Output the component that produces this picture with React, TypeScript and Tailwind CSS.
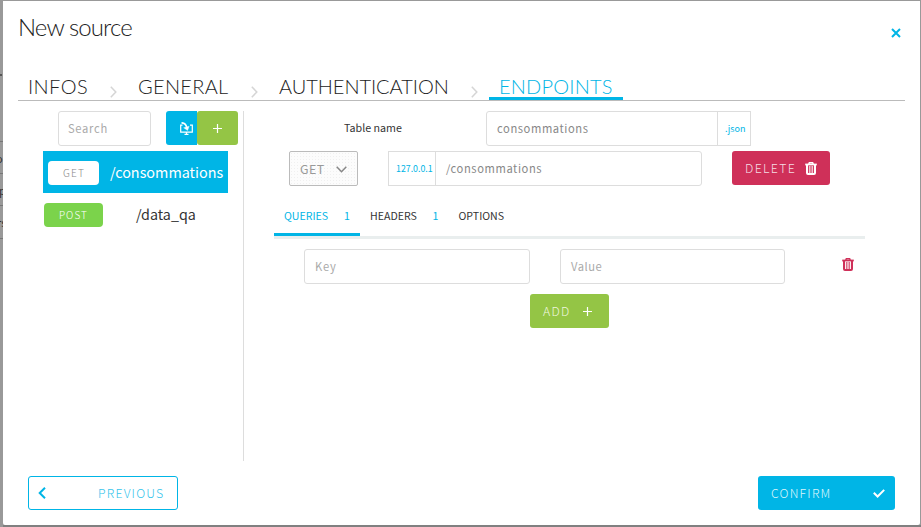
import React from "react";

const body = "font-['Noto_Sans_CJK_SC','Noto_Sans',sans-serif]";
const heading = "font-['Lato',sans-serif] font-light";

function Trash({ className }: { className: string }) {
  return (
    <svg viewBox="0 0 12 13" className={className} fill="none" stroke="currentColor">
      <path d="M0.2 2.5H11.8" strokeWidth="1.8" />
      <path d="M3.8 2.2L4.3 0.8H7.7L8.2 2.2" strokeWidth="1.4" />
      <path d="M2 3V10.9Q2 11.9 3 11.9H9Q10 11.9 10 10.9V3" strokeWidth="2" />
      <path d="M4.4 4V11M6 4V11M7.6 4V11" strokeWidth="0.8" />
    </svg>
  );
}

function Plus({ className }: { className: string }) {
  return (
    <svg viewBox="0 0 9 9" className={className} fill="none" stroke="currentColor" strokeWidth="1.2">
      <path d="M4.5 0V9M0 4.5H9" />
    </svg>
  );
}

function Separator({ className }: { className: string }) {
  return (
    <svg viewBox="0 0 7 12" className={className} fill="none" stroke="#d5d5d5" strokeWidth="1.5">
      <path d="M0.8 0.8L5.8 6L0.8 11.2" />
    </svg>
  );
}

function Backdrop() {
  return (
    <div className="relative h-full w-[3px] shrink-0 overflow-hidden bg-[#999] text-[11px] leading-4 text-[#333]">
      <div className="mt-[74px] h-[2px] w-[2px] bg-[#555]" />
      <div className="mt-[65px] h-px bg-[#777]" />
      <div className="-ml-[4px] mt-[8px] h-[23px]">o</div>
      <div className="h-px bg-[#777]" />
      <div className="-ml-[1px] mt-[8px] h-[23px]">p</div>
      <div className="h-px bg-[#777]" />
      <div className="-ml-[3px] mt-[8px] h-[24px]">rs</div>
      <div className="h-px bg-[#777]" />
    </div>
  );
}

function Steps() {
  const step = "whitespace-nowrap pt-[2px] text-[20px] leading-[24px] text-[#222]";
  return (
    <nav className={`${heading} ml-[15px] flex h-[29px] w-[887px] border-b border-[#bbb]`}>
      <div className={`${step} ml-[10px] w-[61px] tracking-[0.4px]`}>INFOS</div>
      <Separator className="ml-[21px] mt-[14px] h-3 w-[7px]" />
      <div className={`${step} ml-[21px] w-[91px] tracking-[0.3px]`}>GENERAL</div>
      <Separator className="ml-[22px] mt-[14px] h-3 w-[7px]" />
      <div className={`${step} ml-[21px] w-[171px] tracking-[-0.05px]`}>AUTHENTICATION</div>
      <Separator className="ml-[21px] mt-[14px] h-3 w-[7px]" />
      <div className="ml-[11px] h-[28px] w-[134px] border-b-[3px] border-[#00b5e6] pl-[10px] pt-[2px] text-[20px] leading-[24px] tracking-[0.2px] text-[#00b5e6]">ENDPOINTS</div>
    </nav>
  );
}

function Sidebar() {
  return (
    <aside className="ml-[40px] h-[350px] w-[201px] border-r border-[#ddd]">
      <div className="flex">
        <div className="ml-[15px] h-[35px] w-[93px] rounded-[3px] border border-[#ddd] pl-[9px] text-[11.2px] leading-[33px] tracking-[0.7px] text-[#aaa]">Search</div>
        <button className="ml-[15px] flex h-[34px] w-[31px] items-center rounded-l-[3px] bg-[#00b5e6] pl-[14px] text-white">
          <svg viewBox="0 0 13 13" className="h-[13px] w-[13px]" fill="none" stroke="currentColor">
            <path d="M2.5 3.2H0.7V10.2H12.3V3.2H10M4.5 12.3H8.5M6.5 10.2V12.3" strokeWidth="1.2" />
            <path d="M1.5 0.8Q5.8 1 6.8 5.5" strokeWidth="1.7" />
            <path d="M3.6 5.8L9.2 4.2L7.6 8.6Z" fill="currentColor" strokeWidth="0.3" />
          </svg>
        </button>
        <button className="-mr-px flex h-[34px] w-[41px] items-center justify-center rounded-[3px] bg-[#94c545] text-white">
          <Plus className="h-[9px] w-[9px]" />
        </button>
      </div>
      <div className="mt-[5px] flex h-[42px] w-[185px] items-center bg-[#00b5e6]">
        <span className="ml-[5px] mt-[2px] h-[24px] w-[51px] rounded-[4px] bg-white pl-[15px] text-[10.2px] font-light leading-[24px] tracking-[1.1px] text-[#888]">GET</span>
        <span className="ml-[11px] whitespace-nowrap text-[14.4px] leading-[20px] text-white">/consommations</span>
      </div>
      <div className="mt-[10px] flex h-[24px] items-center">
        <span className="ml-[1px] h-[24px] w-[59px] rounded-[4px] bg-[#7bd34b] pl-[15px] text-[10px] font-light leading-[24px] tracking-[1px] text-white">POST</span>
        <span className="-mt-[2px] ml-[33px] whitespace-nowrap text-[14.3px] leading-[20px] text-[#333]">/data_qa</span>
      </div>
    </aside>
  );
}

function Editor() {
  const field = "h-[35px] border border-[#ddd] pl-[10px] text-[11.2px] leading-[33px]";
  return (
    <section className="w-[621px]">
      <div className="flex h-[40px]">
        <div className="ml-[100px] w-[142px] whitespace-nowrap text-[10.7px] leading-[33px] text-[#333]">Table name</div>
        <div className={`${field} w-[232px] rounded-l-[3px] tracking-[0.58px] text-[#888]`}>consommations</div>
        <div className="-ml-px h-[35px] w-[34px] border border-[#ddd] pl-[7px] text-[9px] leading-[33px] text-[#00b5e6]">.json</div>
      </div>
      <div className="flex h-[49px]">
        <div className="ml-[45px] flex h-[35px] w-[69px] items-center rounded-[2px] border border-[#bbb] bg-[#fcfcfc] bg-[radial-gradient(#f0f0f0_0.6px,transparent_0.7px)] bg-[length:3px_3px] pl-[10px] text-[12.4px] tracking-[0.4px] text-[#999]">
          <span className="mt-[1px] w-[36px]">GET</span>
          <svg viewBox="0 0 11 7" className="mt-[2px] h-[7px] w-[11px]" fill="none" stroke="#888" strokeWidth="1.5"><path d="M0.7 0.7L5.5 5.7L10.3 0.7" /></svg>
        </div>
        <div className="ml-[30px] h-[35px] w-[48px] whitespace-nowrap border border-[#ddd] pl-[7px] text-[8.8px] leading-[34px] text-[#00b5e6]">127.0.0.1</div>
        <div className={`${field} -ml-px w-[267px] rounded-r-[3px] tracking-[0.58px] text-[#888]`}>/consommations</div>
        <button className="ml-[30px] flex h-[34px] w-[98px] items-center rounded-[3px] bg-[#cf3059] pl-[13px] text-white">
          <span className="w-[60px] text-left text-[12.4px] font-light tracking-[1.3px] text-[#f4dde3]">DELETE</span>
          <Trash className="h-[13px] w-[12px]" />
        </button>
      </div>
      <div className="ml-[30px] flex h-[39px] w-[591px] border-b-[3px] border-[#e9eeee] text-[10.6px] leading-[31px] text-[#333]">
        <div className="flex h-[36px] w-[86px] border-b-[3px] border-[#00b5e6] pl-[10px] text-[#00b5e6]"><span className="w-[60px]">QUERIES</span><span>1</span></div>
        <div className="ml-[10px] flex w-[88.5px]"><span className="w-[62.5px]">HEADERS</span><span className="text-[#00b5e6]">1</span></div>
        <div>OPTIONS</div>
      </div>
      <div className="mt-[10px] flex h-[45px]">
        <div className={`${field} ml-[60px] w-[226px] rounded-[3px] tracking-[0.8px] text-[#aaa]`}>Key</div>
        <div className={`${field} ml-[30px] w-[225px] rounded-[3px] tracking-[0.5px] text-[#aaa]`}>Value</div>
        <Trash className="ml-[57px] mt-[9px] h-[13px] w-[12px] text-[#cf3059]" />
      </div>
      <button className="ml-[286px] flex h-[34px] w-[79px] items-center rounded-[3px] bg-[#94c545] pl-[13px] text-white">
        <span className="w-[40px] text-left text-[12.3px] font-light tracking-[1.2px] text-[#edf5de]">ADD</span>
        <Plus className="h-[9px] w-[9px]" />
      </button>
    </section>
  );
}

export default function App() {
  return (
    <div className={`${body} flex h-[527px] w-[921px] overflow-hidden bg-[linear-gradient(#999_0,#999_525px,#808080_525px)]`}>
      <Backdrop />
      <main className="mt-px flex h-[524px] w-[917px] flex-col rounded-b-[2px] bg-white">
        <header className="flex h-[71px] items-start justify-between">
          <h1 className={`${heading} ml-[15px] mt-[11px] whitespace-nowrap text-[24px] leading-[30px] tracking-[-0.9px] text-[#222]`}>New source</h1>
          <svg viewBox="0 0 10 10" className="mr-[19px] mt-[27px] h-[10px] w-[10px]" fill="none" stroke="#00b5e6" strokeWidth="2"><path d="M1 1L9 9M9 1L1 9" /></svg>
        </header>
        <Steps />
        <div className="mt-[10px] flex h-[365px]">
          <Sidebar />
          <Editor />
        </div>
        <footer className="flex justify-between pl-[25px] pr-[25px]">
          <button className="flex h-[34px] w-[150px] items-center rounded-[3px] border border-[#00b5e6] pl-[9px] text-[#00b5e6]">
            <svg viewBox="0 0 8 12" className="h-[12px] w-[8px]" fill="none" stroke="currentColor" strokeWidth="2"><path d="M7 0.8L1.7 6L7 11.2" /></svg>
            <span className="ml-[52px] mt-[1px] text-[12.3px] font-light tracking-[1.2px] text-[#35c4eb]">PREVIOUS</span>
          </button>
          <button className="flex h-[34px] w-[137px] items-center rounded-[3px] bg-[#00b5e6] pl-[13px] text-white">
            <span className="mt-[1px] w-[102px] text-left text-[12.3px] font-light tracking-[1.2px] text-[#dcf5fc]">CONFIRM</span>
            <svg viewBox="0 0 12 9" className="h-[9px] w-[12px]" fill="none" stroke="currentColor" strokeWidth="2"><path d="M0.8 3.7L4.6 7.5L11.2 0.9" /></svg>
          </button>
        </footer>
      </main>
    </div>
  );
}
